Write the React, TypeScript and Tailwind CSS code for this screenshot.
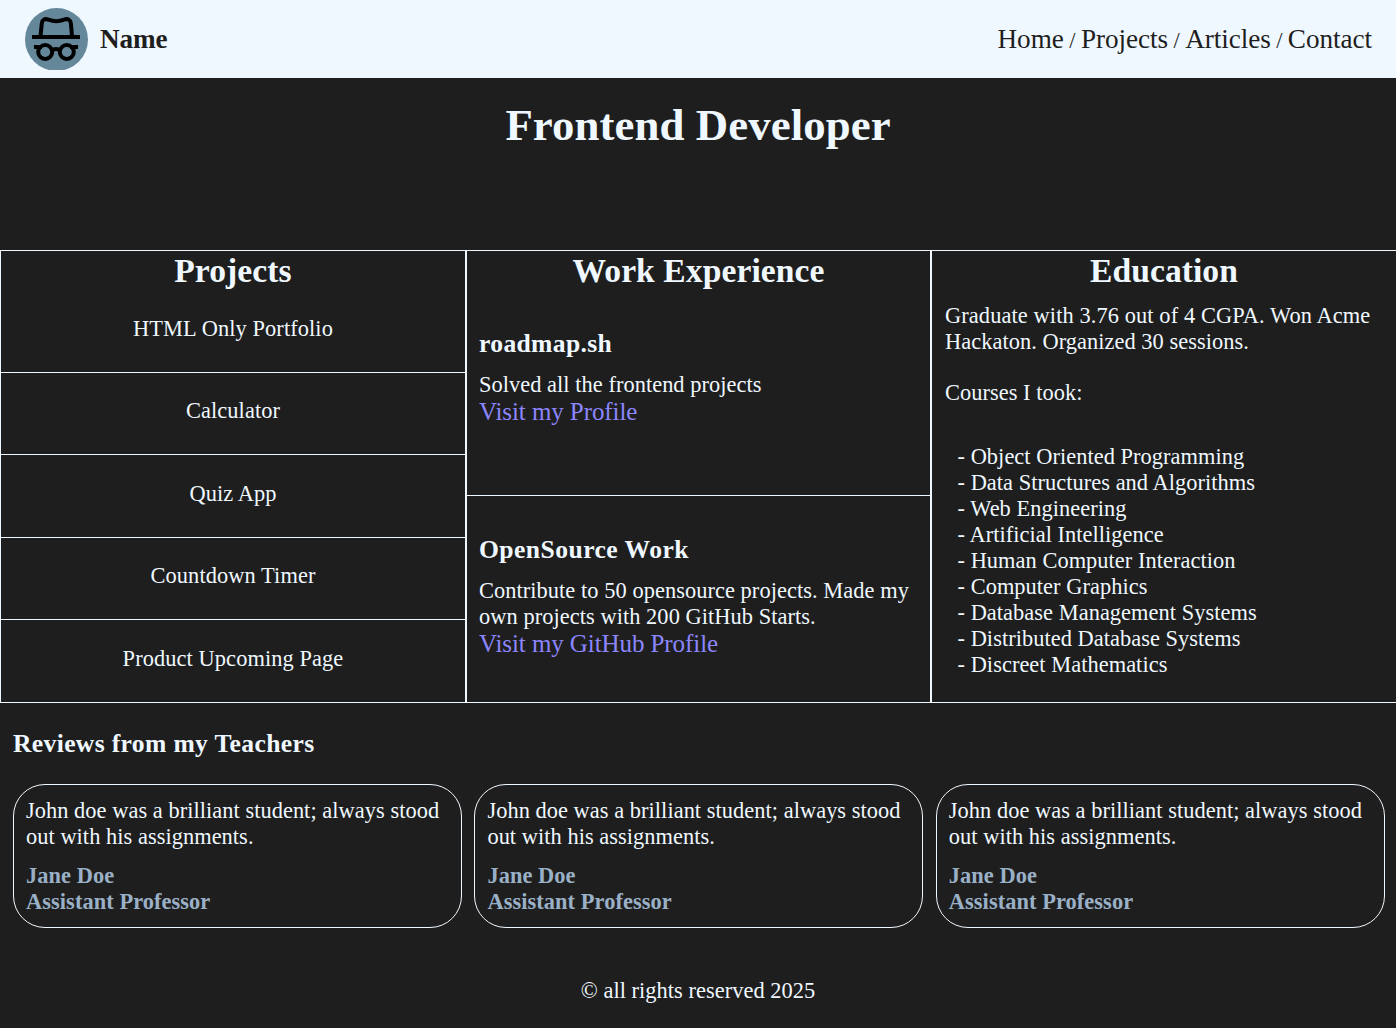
const projects = ['HTML Only Portfolio', 'Calculator', 'Quiz App', 'Countdown Timer', 'Product Upcoming Page'];
const courses = [
  'Object Oriented Programming',
  'Data Structures and Algorithms',
  'Web Engineering',
  'Artificial Intelligence',
  'Human Computer Interaction',
  'Computer Graphics',
  'Database Management Systems',
  'Distributed Database Systems',
  'Discreet Mathematics',
];
const nav = ['Home', 'Projects', 'Articles', 'Contact'];

function Logo() {
  return (
    <svg className="h-[62px] w-[63px]" viewBox="0 0 63 62" fill="none" stroke="#000" strokeWidth="4">
      <circle cx="31.5" cy="31.5" r="31.5" fill="#64879a" stroke="none" />
      <path d="M7 29H55" />
      <path d="M15.5 28L16.8 15.5C17.3 11.5 20 10.300 23.500 11.700C28.500 13.700 34 13.700 39 11.700C42.500 10.300 45.400 11.500 45.900 15.500L47 28" />
      <path d="M9 39H17M45 39H53" />
      <circle cx="20.200" cy="44" r="7" />
      <circle cx="41.800" cy="44" r="7" />
      <path d="M27 42.500C29 40.500 33 40.500 35 42.500" />
    </svg>
  );
}

export default function App() {
  return (
    <div className="h-[1028px] w-full overflow-hidden bg-[#1e1e1e] font-['Liberation_Serif',serif] text-[22.4px] leading-[26px] tracking-[0.045px] text-[#f0f8ff]">
      <header className="flex h-[78px] items-center justify-between bg-[#f0f8ff] pr-6 pl-[25px] text-[#1e1e1e]">
        <div className="flex items-center gap-3">
          <Logo />
          <span className="text-[27.2px] font-bold tracking-[-0.1px]">Name</span>
        </div>
        <nav className="flex items-baseline pt-[2px] tracking-[-0.1px]">
          {nav.map((item, i) => (
            <span key={item} className="whitespace-pre">
              {i > 0 && ' / '}
              <a className="text-[27.2px] tracking-[-0.06px]">{item}</a>
            </span>
          ))}
        </nav>
      </header>

      <h1 className="mt-[22px] text-center text-[44.8px] leading-[51px] font-bold tracking-[0.09px]">Frontend Developer</h1>

      <main className="mt-[99px] grid h-[453px] w-[1397px] grid-cols-[466px_465px_466px]">
        <section className="flex flex-col border border-[#f0f8ff]">
          <h2 className="h-[39px] text-center text-[33.6px] leading-[39px] font-bold tracking-[0.08px]">Projects</h2>
          <ul className="grid grid-rows-[83px_82px_83px_82px_82px] divide-y divide-[#f0f8ff]">
            {projects.map((p) => (
              <li key={p} className="pt-[25px] text-center tracking-[0.09px] odd:pt-[26px]">{p}</li>
            ))}
          </ul>
        </section>

        <section className="flex flex-col border border-[#f0f8ff]">
          <h2 className="h-[39px] text-center text-[33.6px] leading-[39px] font-bold tracking-[0.08px]">Work Experience</h2>
          <article className="h-[206px] border-b border-[#f0f8ff] px-3 pt-[39px]">
            <h3 className="text-[25.6px] leading-[29px] font-bold tracking-[0.35px]">roadmap.sh</h3>
            <p className="mt-[14px]">Solved all the frontend projects</p>
            <a className="-mt-px block text-[25px] leading-[29px] tracking-[-0.08px] text-[#8c86ff]">Visit my Profile</a>
          </article>
          <article className="px-3 pt-[39px]">
            <h3 className="text-[25.6px] leading-[29px] font-bold tracking-[0.45px]">OpenSource Work</h3>
            <p className="mt-[14px] tracking-[0.06px]">Contribute to 50 opensource projects. Made my own projects with 200 GitHub Starts.</p>
            <a className="-mt-px block text-[25px] leading-[29px] tracking-[-0.08px] text-[#8c86ff]">Visit my GitHub Profile</a>
          </article>
        </section>

        <section className="border border-[#f0f8ff]">
          <h2 className="h-[39px] text-center text-[33.6px] leading-[39px] font-bold">Education</h2>
          <div className="px-[13px] pt-[13px]">
            <p className="-mr-2"><span className="tracking-[0.1px]">Graduate with 3.76 out of 4 CGPA. Won Acme</span> Hackaton. Organized 30 sessions.</p>
            <p className="mt-[25px]">Courses I took:</p>
            <ul className="mt-[38px] pl-[12.5px]">
              {courses.map((c) => (
                <li key={c}>- {c}</li>
              ))}
            </ul>
          </div>
        </section>
      </main>

      <section className="px-[13px] pt-[26px]">
        <h3 className="text-[25.6px] leading-[29px] font-bold tracking-[0.35px]">Reviews from my Teachers</h3>
        <div className="mt-[26px] grid grid-cols-[449px_449px_449px] gap-x-[12.4px]">
          {[0, 1, 2].map((i) => (
            <article key={i} className="h-36 rounded-[32px] border border-[#f0f8ff] px-3 pt-[13px]">
              <p>John doe was a brilliant student; always stood out with his assignments.</p>
              <p className="mt-[13px] font-bold tracking-[0.07px] text-[#9ab0c6]">
                Jane Doe
                <br />
                Assistant Professor
              </p>
            </article>
          ))}
        </div>
      </section>

      <footer className="mt-[50px] text-center">© all rights reserved 2025</footer>
    </div>
  );
}
